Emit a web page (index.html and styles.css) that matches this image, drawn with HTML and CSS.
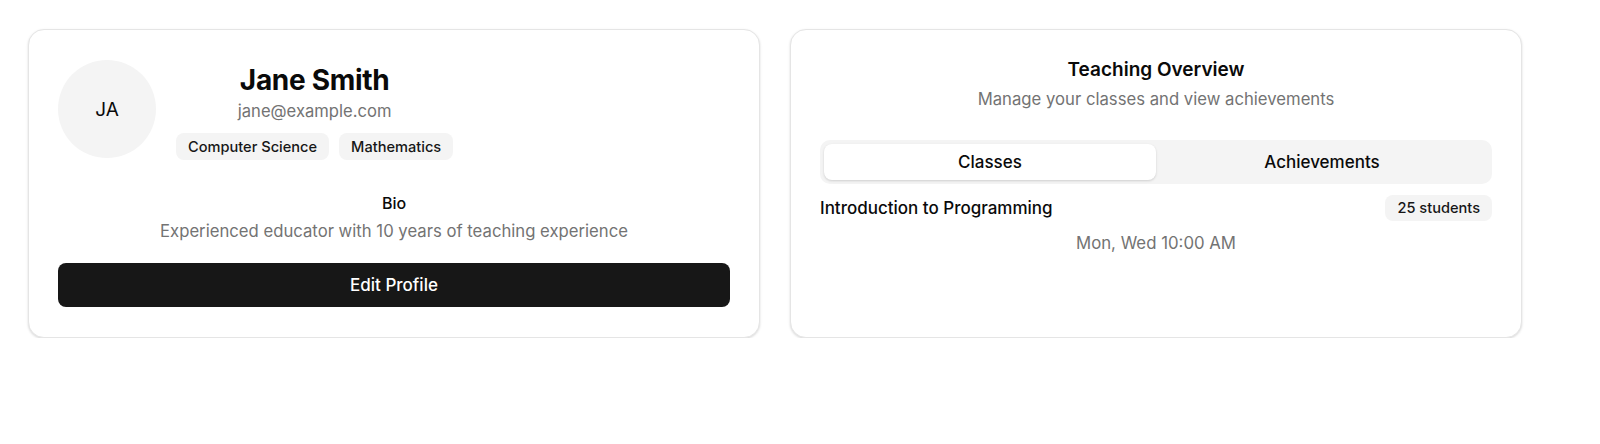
FILE: index.html
```html
<!DOCTYPE html>
<html lang="en">
<head>
<meta charset="utf-8">
<title>Teacher Profile</title>
<link rel="stylesheet" href="styles.css">
</head>
<body>
<main class="page">
  <section class="card profile">
    <div class="profile-head">
      <div class="avatar">JA</div>
      <div class="identity">
        <h1 class="name">Jane Smith</h1>
        <p class="email">jane@example.com</p>
        <div class="tags">
          <span class="tag">Computer Science</span>
          <span class="tag">Mathematics</span>
        </div>
      </div>
    </div>
    <div class="bio">
      <h2 class="bio-label">Bio</h2>
      <p class="bio-text">Experienced educator with 10 years of teaching experience</p>
    </div>
    <button class="edit-btn" type="button">Edit Profile</button>
  </section>

  <section class="card overview">
    <h2 class="ov-title">Teaching Overview</h2>
    <p class="ov-sub">Manage your classes and view achievements</p>
    <div class="tabs">
      <button class="tab active" type="button">Classes</button>
      <button class="tab" type="button">Achievements</button>
    </div>
    <div class="course-row">
      <span class="course-name">Introduction to Programming</span>
      <span class="tag count">25 students</span>
    </div>
    <p class="schedule">Mon, Wed 10:00 AM</p>
  </section>
</main>
</body>
</html>
```
FILE: styles.css
```css
* { box-sizing: border-box; }
html, body { margin: 0; padding: 0; background: #ffffff; }
body {
  font-family: Inter, "Noto Sans", "Liberation Sans", sans-serif;
  color: #0a0a0a;
}
h1, h2, p { margin: 0; }
.page {
  display: grid;
  grid-template-columns: 732px 732px;
  gap: 30px;
  padding: 29px 0 0 28px;
  align-items: stretch;
}
.card {
  border: 1px solid #e5e5e5;
  border-radius: 16px;
  background: #fff;
  box-shadow: 0 1px 3px rgba(0,0,0,0.1), 0 1px 2px rgba(0,0,0,0.06);
  padding: 30px 29px 27px 29px;
  height: 309px;
}
.profile-head {
  display: flex;
  align-items: flex-start;
  gap: 20px;
}
.avatar {
  width: 98px;
  height: 98px;
  border-radius: 50%;
  background: #f4f4f4;
  display: flex;
  align-items: center;
  justify-content: center;
  font-size: 19px;
  flex: none;
}
.identity {
  display: flex;
  flex-direction: column;
  align-items: center;
  padding-top: 2px;
}
.name {
  font-size: 28px;
  font-weight: 700;
  line-height: 36px;
  letter-spacing: -0.3px;
}
.email {
  font-size: 16.6px;
  line-height: 26px;
  color: #737373;
}
.tags {
  display: flex;
  gap: 10px;
  margin-top: 9px;
}
.tag {
  display: inline-flex;
  align-items: center;
  height: 27px;
  padding: 0 12px;
  border-radius: 8px;
  background: #f4f4f4;
  font-size: 14.6px;
  font-weight: 500;
  color: #171717;
}
.bio {
  margin-top: 31px;
  text-align: center;
}
.bio-label {
  font-size: 16px;
  font-weight: 500;
  line-height: 24px;
}
.bio-text {
  margin-top: 3px;
  font-size: 16.7px;
  line-height: 26px;
  color: #737373;
}
.edit-btn {
  display: block;
  width: 100%;
  height: 44px;
  margin-top: 19px;
  border: none;
  border-radius: 8px;
  background: #171717;
  color: #fff;
  font-family: inherit;
  font-size: 17px;
  font-weight: 500;
}
.overview {
  text-align: center;
  padding-top: 27px;
}
.ov-title {
  font-size: 19px;
  font-weight: 600;
  line-height: 26px;
}
.ov-sub {
  margin-top: 4px;
  font-size: 16.7px;
  line-height: 24px;
  color: #737373;
}
.tabs {
  display: grid;
  grid-template-columns: 1fr 1fr;
  margin-top: 29px;
  padding: 4px;
  height: 44px;
  background: #f4f4f4;
  border-radius: 10px;
}
.tab {
  border: none;
  background: transparent;
  border-radius: 8px;
  font-family: inherit;
  font-size: 17px;
  font-weight: 500;
  color: #0a0a0a;
}
.tab.active {
  background: #fff;
  box-shadow: 0 1px 3px rgba(0,0,0,0.1), 0 1px 2px rgba(0,0,0,0.06);
}
.course-row {
  display: flex;
  justify-content: space-between;
  align-items: center;
  margin-top: 11px;
  text-align: left;
}
.course-name {
  font-size: 17px;
  font-weight: 500;
}
.count {
  height: 26px;
}
.schedule {
  margin-top: 10px;
  font-size: 16.8px;
  line-height: 24px;
  color: #737373;
}
```
